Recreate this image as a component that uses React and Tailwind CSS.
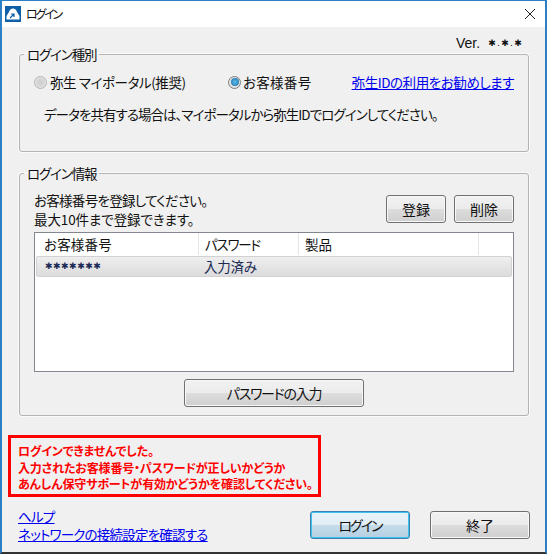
import React from "react";

const Btn = ({ primary, className = "", children }) => (
    <button className={`flex items-center justify-center rounded-[3px] border text-[14px] text-[#111] ${primary ? "border-[#3c7fb1] bg-[linear-gradient(#eaf3f9_0%,#e0edf5_50%,#c6dcea_50%,#b5d0e2_100%)] shadow-[inset_0_0_0_1px_#3cc3ec]" : "border-[#707070] bg-[linear-gradient(#f2f2f2_0%,#ebebeb_50%,#dddddd_50%,#cfcfcf_100%)] shadow-[inset_0_0_0_1px_#f8f8f8]"} ${className}`}>
        {children}
    </button>
);

const Radio = ({ checked }) => (
    <span className={`flex h-[13px] w-[13px] shrink-0 items-center justify-center rounded-full border ${checked ? "border-[#7f7f7f] bg-[#e4e4e4]" : "border-[#b5b5b5] bg-[radial-gradient(#d2d2d2_35%,#f2f2f2_100%)]"}`}>
        {checked && <span className="h-[8px] w-[8px] rounded-full bg-[radial-gradient(#5cc0ee,#17689f)]" />}
    </span>
);

const Group = ({ title, className = "", children }) => (
    <fieldset className={`ml-[17px] mr-[16px] rounded-[3px] border border-[#b4b4b4] shadow-[0_0_0_1px_#fafafa] ${className}`}>
        <legend className="ml-[4px] px-[3px] text-[13.5px] leading-[15px] tracking-[-1.15px] text-[#111]">{title}</legend>
        {children}
    </fieldset>
);

const App = () => {
    return (
        <div className="flex h-[554px] w-[547px] flex-col border-x-2 border-t border-b-2 border-x-[#2b7fc4] border-t-[#2b7fc4] border-b-[#333] bg-[#f0f0f0] font-['Noto_Sans_CJK_JP','Liberation_Sans',sans-serif] [font-feature-settings:'palt'] text-[13.5px] text-[#111]">
            <div className="flex h-[26px] shrink-0 items-center bg-white pl-[3px] pr-[6px]">
                <svg width="16" height="16" viewBox="0 0 16 16" className="shrink-0">
                    <rect width="16" height="16" fill="#0f5fa8" />
                    <path d="M1.5 13.5V10L4 6Q5 2.5 8 2.5Q11 2.5 12 6L14.5 10V13.5Z" fill="#fff" />
                    <path d="M5 12l3.5-3.5M6 8h3v3" stroke="#0f5fa8" strokeWidth="1.2" fill="none" />
                </svg>
                <span className="ml-[5px] text-[12px] tracking-[-2.2px]">ログイン</span>
                <svg width="12" height="12" viewBox="0 0 12 12" className="ml-auto mr-[3px]">
                    <path d="M1 1l10 10M11 1L1 11" stroke="#222" strokeWidth="1" />
                </svg>
            </div>

            <div className="mr-[22px] mt-[8px] flex h-[16px] items-center justify-end font-['Liberation_Sans',sans-serif] text-[14px] leading-[16px]">
                Ver.
                <span className="ml-[8px] font-['DejaVu_Sans',sans-serif] text-[9px] tracking-[1.3px]">✱.✱.✱</span>
            </div>

            <Group title="ログイン種別" className="mt-[-4px] h-[105px]">
                <div className="mt-[11px] flex h-[18px] items-center pl-[14px] pr-[14px]">
                    <Radio />
                    <span className="ml-[3px] w-[178px] tracking-[-0.4px]">弥生 マイポータル(推奨)</span>
                    <Radio checked />
                    <span className="ml-[2px] tracking-[0.3px]">お客様番号</span>
                    <a className="ml-auto tracking-[-0.45px] text-[#0000ee] underline">弥生IDの利用をお勧めします</a>
                </div>
                <p className="mt-[14px] pl-[24px] leading-[18px] tracking-[-0.95px]">データを共有する場合は、マイポータルから弥生IDでログインしてください。</p>
            </Group>

            <Group title="ログイン情報" className="mt-[14px] h-[250px]">
                <div className="flex items-start justify-between px-[14px] pt-[10px]">
                    <p className="leading-[19px] tracking-[-0.7px]">
                        お客様番号を登録してください。<br />
                        <span className="tracking-[-0.1px]">最大10件まで登録できます。</span>
                    </p>
                    <div className="mt-[4px] flex gap-[8px]">
                        <Btn className="h-[28px] w-[60px]">登録</Btn>
                        <Btn className="h-[28px] w-[60px]">削除</Btn>
                    </div>
                </div>
                <div className="mx-[14px] mt-[3px] h-[140px] border border-[#828790] bg-white">
                    <div className="flex h-[22px] leading-[22px]">
                        <span className="w-[164px] border-r border-[#e3e5e8] pl-[9px] tracking-[0.2px]">お客様番号</span>
                        <span className="w-[100px] border-r border-[#e3e5e8] pl-[6px] tracking-[-1.2px]">パスワード</span>
                        <span className="w-[180px] border-r border-[#e3e5e8] pl-[6px]">製品</span>
                    </div>
                    <div className="mx-[1px] mt-[1px] flex h-[21px] items-center rounded-[2px] border border-[#d2d2d2] bg-[linear-gradient(#eeeeee,#dcdcdc)] text-[#1a2a55]">
                        <span className="w-[163px] pl-[8px] font-['DejaVu_Sans',sans-serif] text-[9px] tracking-[0.5px]">✱✱✱✱✱✱✱</span>
                        <span className="pl-[4px] tracking-[-0.2px]">入力済み</span>
                    </div>
                </div>
                <Btn className="mx-auto mt-[7px] h-[28px] w-[180px] tracking-[-1.25px]">パスワードの入力</Btn>
            </Group>

            <div className="ml-[6px] mt-[19px] h-[62px] w-[313px] border-[3px] border-[#ff0000] pl-[7px] pt-[5px] text-[12px] font-bold leading-[16.5px] tracking-[-0.15px] text-[#ff0000]">
                ログインできませんでした。<br />
                入力されたお客様番号・パスワードが正しいかどうか<br />
                あんしん保守サポートが有効かどうかを確認してください。
            </div>

            <div className="mt-[11px] flex items-start pl-[16px] pr-[15px]">
                <div className="mt-[-1px] flex flex-col leading-[18px] tracking-[-0.8px] text-[#0000ee] underline">
                    <a>ヘルプ</a>
                    <a>ネットワークの接続設定を確認する</a>
                </div>
                <Btn primary className="ml-auto mt-[3px] h-[28px] w-[100px] text-[13px] tracking-[-2px]">ログイン</Btn>
                <Btn className="ml-[20px] mt-[3px] h-[28px] w-[100px]">終了</Btn>
            </div>
        </div>
    );
};

export default App;
